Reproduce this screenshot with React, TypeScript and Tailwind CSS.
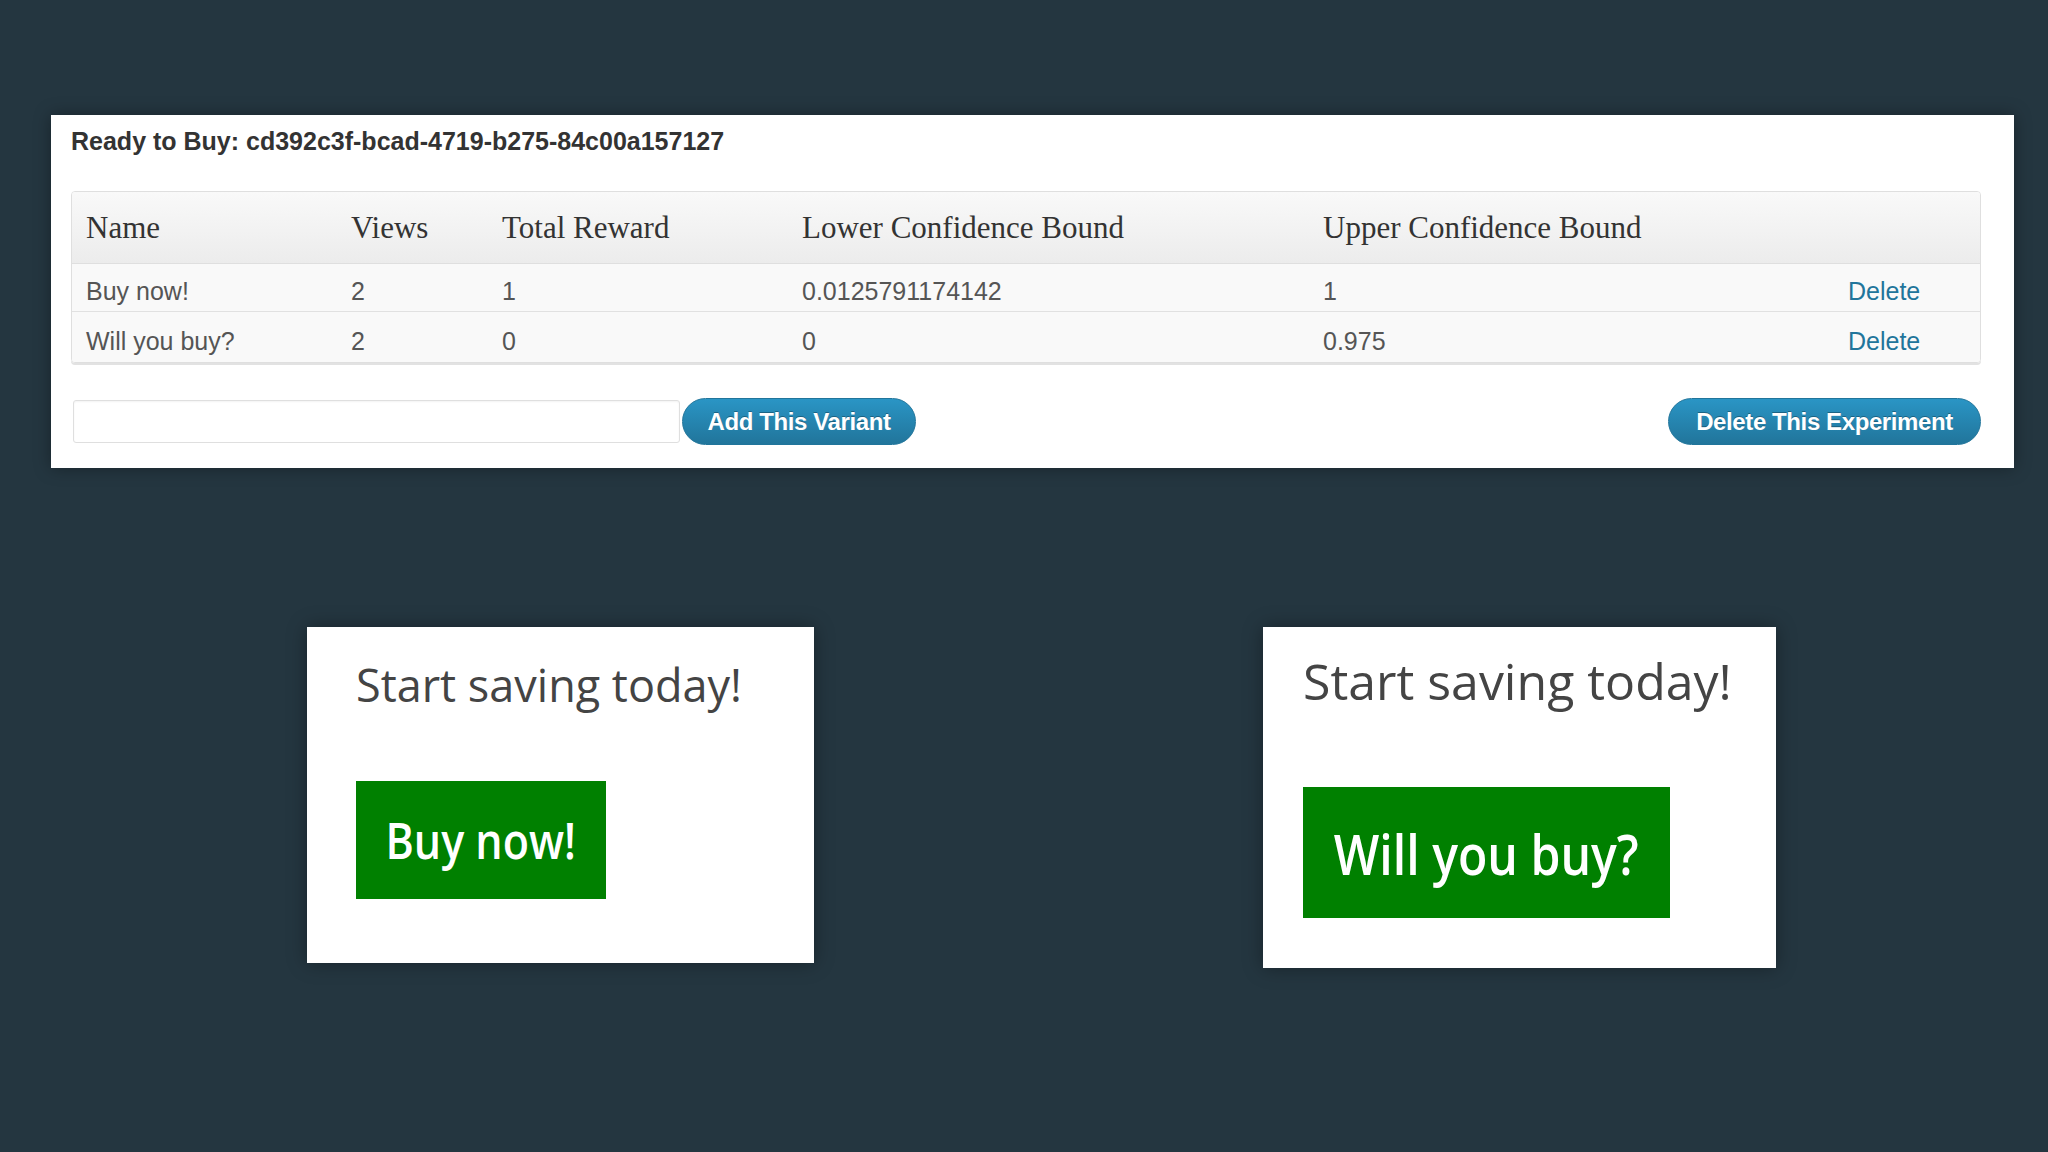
import React from "react";

const rows = [
  { name: "Buy now!", views: "2", reward: "1", lower: "0.0125791174142", upper: "1" },
  { name: "Will you buy?", views: "2", reward: "0", lower: "0", upper: "0.975" },
];

const sans = { fontFamily: '"Liberation Sans", Arial, sans-serif' };
const serif = { fontFamily: '"Liberation Serif", Georgia, serif' };
const open = { fontFamily: '"Open Sans", "Noto Sans", sans-serif' };

function PrimaryButton({ children, className = "" }: { children: React.ReactNode; className?: string }) {
  return (
    <button
      className={
        "h-[47px] rounded-full border border-[#21759b] bg-linear-to-b from-[#2a95c5] to-[#21759b] px-[23px] text-[24px] font-bold leading-none tracking-[-0.4px] text-white [text-shadow:0_-1px_0_rgba(0,0,0,0.3)] " +
        className
      }
      style={sans}
    >
      {children}
    </button>
  );
}

export default function App() {
  return (
    <div className="flex min-h-screen w-full flex-col bg-[#243640]">
      {/* Top admin panel */}
      <div className="ml-[51px] mt-[115px] flex w-[1963px] flex-col bg-white pb-[23px] pl-[20px] pr-[33px] pt-[14px] shadow-[0_0_16px_rgba(0,0,0,0.35)]">
        <h1 className="text-[25px] font-bold leading-none text-[#333]" style={sans}>
          Ready to Buy: cd392c3f-bcad-4719-b275-84c00a157127
        </h1>

        <div className="mt-[37px] overflow-hidden rounded-[4px] border border-[#dfdfdf] shadow-[0_2px_0_#e2e2e2]">
          <div
            className="grid h-[72px] grid-cols-[265px_151px_300px_521px_525px_1fr] items-center border-b border-[#dfdfdf] bg-linear-to-b from-[#f9f9f9] to-[#ececec] pl-[14px] text-[31px] leading-none text-[#333]"
            style={serif}
          >
            <div>Name</div>
            <div>Views</div>
            <div>Total Reward</div>
            <div>Lower Confidence Bound</div>
            <div>Upper Confidence Bound</div>
            <div />
          </div>
          {rows.map((r, i) => (
            <div
              key={r.name}
              className={
                "grid grid-cols-[265px_151px_300px_521px_525px_1fr] items-center bg-[#f9f9f9] pl-[14px] pt-[8px] text-[25px] leading-none text-[#555] " +
                (i === 0 ? "h-[48px] border-b border-[#e1e1e1]" : "h-[50px]")
              }
              style={sans}
            >
              <div>{r.name}</div>
              <div>{r.views}</div>
              <div>{r.reward}</div>
              <div>{r.lower}</div>
              <div>{r.upper}</div>
              <div className="text-[#21759b]">Delete</div>
            </div>
          ))}
        </div>

        <div className="mt-[35px] flex items-center">
          <input
            className="ml-[2px] h-[43px] w-[607px] rounded-[3px] border border-[#dfdfdf] bg-white shadow-[inset_0_1px_2px_rgba(0,0,0,0.05)] outline-none"
            aria-label="Variant name"
          />
          <PrimaryButton className="ml-[2px] w-[234px] px-0">Add This Variant</PrimaryButton>
          <div className="flex-1" />
          <PrimaryButton className="w-[313px] px-0">Delete This Experiment</PrimaryButton>
        </div>
      </div>

      {/* Variant previews */}
      <div className="mt-[159px] flex items-start gap-[449px] pl-[307px]">
        <div className="flex h-[336px] w-[507px] flex-col items-start bg-white pl-[49px] pt-[35px] shadow-[0_0_18px_rgba(0,0,0,0.35)]">
          <div className="text-[45px] leading-none text-[#444]" style={open}>
            Start saving today!
          </div>
          <div className="mt-[74px] flex h-[118px] w-[250px] items-center justify-center bg-[#008000]">
            <span className="inline-block scale-x-[0.86] text-[50px] font-semibold leading-none text-white" style={open}>
              Buy now!
            </span>
          </div>
        </div>

        <div className="flex h-[341px] w-[513px] flex-col items-start bg-white pl-[40px] pt-[29px] shadow-[0_0_18px_rgba(0,0,0,0.35)]">
          <div className="text-[50px] leading-none text-[#444]" style={open}>
            Start saving today!
          </div>
          <div className="mt-[81px] flex h-[131px] w-[367px] items-center justify-center bg-[#008000]">
            <span className="inline-block scale-x-[0.86] whitespace-nowrap text-[56px] font-semibold leading-none text-white" style={open}>
              Will you buy?
            </span>
          </div>
        </div>
      </div>
    </div>
  );
}
